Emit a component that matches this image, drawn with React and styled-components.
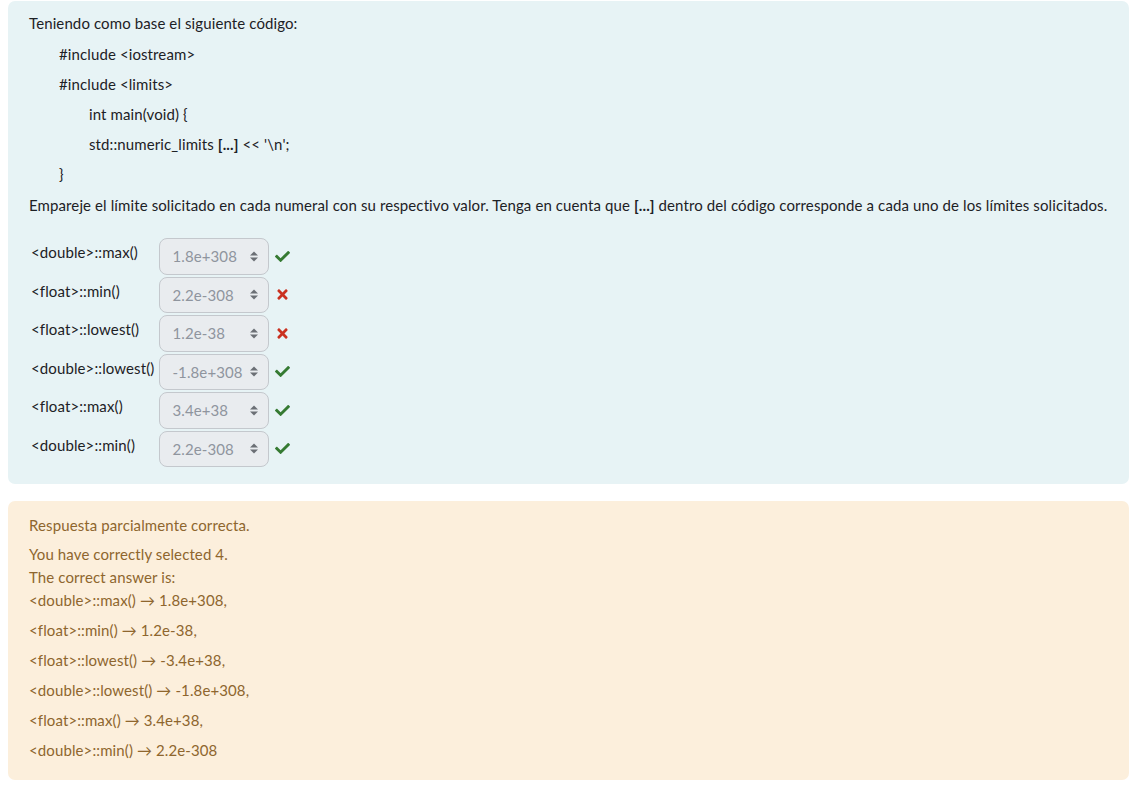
import React from 'react';
import styled, { createGlobalStyle } from 'styled-components';
import { FaCheck, FaTimes } from 'react-icons/fa';

const Global = createGlobalStyle`
  body {
    margin: 0;
    background: #fff;
    font-family: Lato, "Liberation Sans", sans-serif;
    font-size: 15px;
    letter-spacing: 0.11px;
    color: #1d2125;
  }
`;

const Page = styled.div`
  padding: 1px 5px 12px 8px;
  display: flex;
  flex-direction: column;
  gap: 17px;
`;

const QuestionBox = styled.div`
  background: #e7f3f5;
  border-radius: 7px;
  padding: 11px 12px 17px 21px;
`;

const Para = styled.p`
  margin: 0 0 ${p => p.$mb ?? 8}px;
  line-height: 22px;
  padding-left: ${p => p.$indent || 0}px;
  white-space: ${p => (p.$nowrap ? 'nowrap' : 'normal')};
`;

const Matches = styled.div`
  margin-top: 22px;
  display: grid;
  grid-template-columns: auto auto auto;
  justify-content: start;
  row-gap: 2px;
`;

const Label = styled.div`
  padding: 3px 5px 0 2px;
  line-height: 22px;
  white-space: nowrap;
`;

const Select = styled.div`
  width: 110px;
  height: 36.5px;
  box-sizing: border-box;
  border: 1px solid #c4c8cd;
  border-radius: 8px;
  background: #e9ecef;
  color: #8f959e;
  display: flex;
  align-items: center;
  justify-content: space-between;
  padding: 0 10px 0 12px;
  white-space: nowrap;
`;

const Mark = styled.div`
  display: flex;
  align-items: center;
  padding-left: 6px;
  font-size: 15px;
  color: ${p => (p.$ok ? '#357a32' : '#ca3120')};
`;

const Feedback = styled.div`
  background: #fcefdc;
  border-radius: 7px;
  padding: 13px 20px 18px 21px;
  color: #8e662e;
`;

const Line = styled.div`
  line-height: 23px;
  margin-top: ${p => p.$mt || 0}px;
`;

const Arrows = () => (
  <svg width="8" height="11" viewBox="0 0 8 11">
    <path d="M0 4.5 L4 0.5 L8 4.5 Z M0 6.5 L4 10.5 L8 6.5 Z" fill="#6b6f75" />
  </svg>
);

const rows = [
  ['<double>::max()', '1.8e+308', true],
  ['<float>::min()', '2.2e-308', false],
  ['<float>::lowest()', '1.2e-38', false],
  ['<double>::lowest()', '-1.8e+308', true],
  ['<float>::max()', '3.4e+38', true],
  ['<double>::min()', '2.2e-308', true],
];

const answers = [
  '<double>::max() → 1.8e+308,',
  '<float>::min() → 1.2e-38,',
  '<float>::lowest() → -3.4e+38,',
  '<double>::lowest() → -1.8e+308,',
  '<float>::max() → 3.4e+38,',
  '<double>::min() → 2.2e-308',
];

export default function App() {
  return (
    <>
      <Global />
      <Page>
        <QuestionBox>
          <Para $mb={9}>Teniendo como base el siguiente código:</Para>
          <Para $indent={30}>#include &lt;iostream&gt;</Para>
          <Para $indent={30}>#include &lt;limits&gt;</Para>
          <Para $indent={60}>int main(void) {'{'}</Para>
          <Para $indent={60}>
            std::numeric_limits <b>[...]</b> &lt;&lt; '\n';
          </Para>
          <Para $indent={30} $mb={9}>{'}'}</Para>
          <Para $mb={0} $nowrap>
            Empareje el límite solicitado en cada numeral con su respectivo valor. Tenga en cuenta que{' '}
            <b>[...]</b> dentro del código corresponde a cada uno de los límites solicitados.
          </Para>
          <Matches>
            {rows.map(([label, value, ok]) => (
              <React.Fragment key={label}>
                <Label>{label}</Label>
                <Select>
                  <span>{value}</span>
                  <Arrows />
                </Select>
                <Mark $ok={ok}>{ok ? <FaCheck /> : <FaTimes />}</Mark>
              </React.Fragment>
            ))}
          </Matches>
        </QuestionBox>
        <Feedback>
          <Line>Respuesta parcialmente correcta.</Line>
          <Line $mt={6}>You have correctly selected 4.</Line>
          <Line>The correct answer is:</Line>
          {answers.map((a, i) => (
            <Line key={a} $mt={i ? 7 : 0}>{a}</Line>
          ))}
        </Feedback>
      </Page>
    </>
  );
}
